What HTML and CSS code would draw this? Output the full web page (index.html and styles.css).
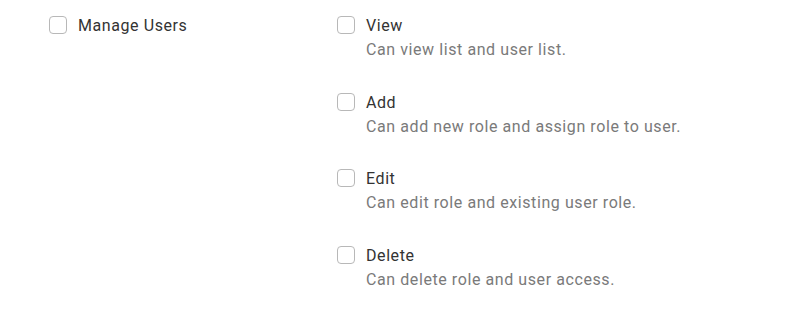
FILE: index.html
```html
<!DOCTYPE html>
<html>
<head>
<meta charset="utf-8">
<link rel="stylesheet" href="styles.css">
</head>
<body>
<div class="perm">
  <div class="group">
    <label class="check"><span class="box"></span><span class="title">Manage Users</span></label>
  </div>
  <div class="items">
    <div class="item">
      <label class="check"><span class="box"></span><span class="title">View</span></label>
      <div class="desc">Can view list and user list.</div>
    </div>
    <div class="item">
      <label class="check"><span class="box"></span><span class="title">Add</span></label>
      <div class="desc">Can add new role and assign role to user.</div>
    </div>
    <div class="item">
      <label class="check"><span class="box"></span><span class="title">Edit</span></label>
      <div class="desc">Can edit role and existing user role.</div>
    </div>
    <div class="item">
      <label class="check"><span class="box"></span><span class="title">Delete</span></label>
      <div class="desc">Can delete role and user access.</div>
    </div>
  </div>
</div>
</body>
</html>
```
FILE: styles.css
```css
html, body { margin: 0; padding: 0; background: #fff; }
body {
  font-family: Roboto, "Liberation Sans", sans-serif;
  font-size: 16px;
  letter-spacing: 0.58px;
  line-height: 24px;
  color: #333;
}
.perm {
  display: flex;
  padding: 14px 0 0 49px;
}
.group { width: 288px; }
.items { display: flex; flex-direction: column; gap: 28.67px; }
.check { display: flex; align-items: flex-start; gap: 11px; }
.box {
  width: 16px; height: 16px;
  margin-top: 2px;
  border: 1px solid #b8b8b8;
  border-radius: 4px;
  background: #fff;
  flex: none;
}
.title { color: #333; }
.desc { color: #7a7a7a; padding-left: 29px; }
```
